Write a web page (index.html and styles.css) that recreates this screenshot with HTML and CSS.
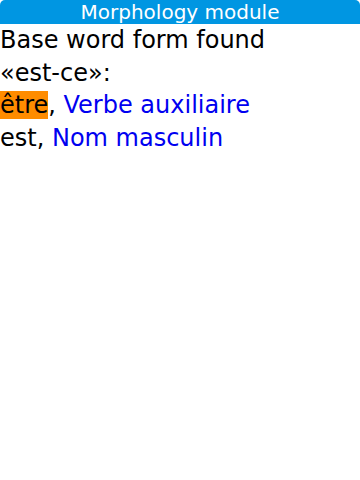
FILE: index.html
```html
<!DOCTYPE html>
<html>
<head>
<meta charset="utf-8">
<link rel="stylesheet" href="styles.css">
</head>
<body>
<div class="screen">
  <div class="titlebar">Morphology module</div>
  <div class="content">
    <div class="line">Base word form found</div>
    <div class="line">«est-ce»:</div>
    <div class="line"><span class="hl">être</span>, <span class="pos">Verbe auxiliaire</span></div>
    <div class="line">est, <span class="pos">Nom masculin</span></div>
  </div>
</div>
</body>
</html>
```
FILE: styles.css
```css
html, body {
  margin: 0;
  padding: 0;
  background: #ffffff;
}
.screen {
  width: 360px;
  height: 480px;
  background: #ffffff;
  font-family: "DejaVu Sans", sans-serif;
}
.titlebar {
  height: 24px;
  line-height: 24px;
  background: #0096e2;
  color: #ffffff;
  font-size: 20px;
  text-align: center;
  border-radius: 5px 5px 0 0;
}
.content {
  padding-top: 0px;
  font-size: 24px;
  color: #000000;
}
.line {
  height: 32.5px;
  line-height: 32.5px;
  white-space: nowrap;
}
.hl {
  background: #ff8c00;
}
.pos {
  color: #0000f0;
}
```
